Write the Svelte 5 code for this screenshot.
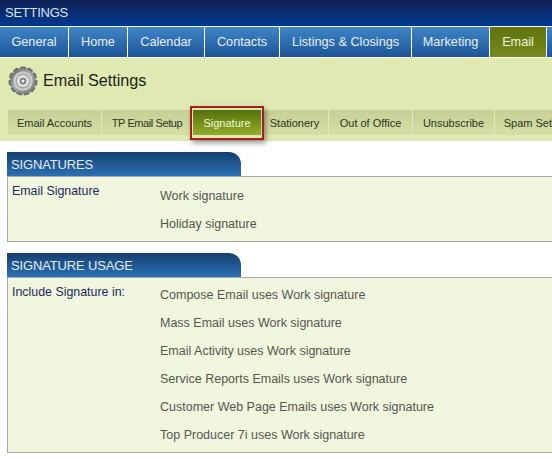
<script>
  const navItems = [
    { label: 'General', width: 69 },
    { label: 'Home', width: 59 },
    { label: 'Calendar', width: 77 },
    { label: 'Contacts', width: 75 },
    { label: 'Listings & Closings', width: 132 },
    { label: 'Marketing', width: 78 },
    { label: 'Email', width: 57, active: true }
  ]

  const subTabs = [
    { label: 'Email Accounts', width: 94 },
    { label: 'TP Email Setup', width: 91, tight: true },
    { label: 'Signature', width: 68, active: true },
    { label: 'Stationery', width: 68 },
    { label: 'Out of Office', width: 84 },
    { label: 'Unsubscribe', width: 82 },
    { label: 'Spam Settings', width: 90 }
  ]

  const signatures = ['Work signature', 'Holiday signature']

  const usage = [
    'Compose Email uses Work signature',
    'Mass Email uses Work signature',
    'Email Activity uses Work signature',
    'Service Reports Emails uses Work signature',
    'Customer Web Page Emails uses Work signature',
    'Top Producer 7i uses Work signature'
  ]

  // gear outline: 11 rounded teeth around the centre
  const teeth = Array.from({ length: 11 }, (_, i) => (i * 360) / 11)
</script>

<div class="page">
  <div class="title-bar">SETTINGS</div>

  <nav class="main-nav">
    {#each navItems as item}
      <div class="nav-item" class:active={item.active} style="width: {item.width}px">{item.label}</div>
    {/each}
  </nav>

  <div class="settings-head">
    <div class="heading">
      <svg class="gear" width="30" height="30" viewBox="0 0 32 32">
        <defs>
          <linearGradient id="gearFill" x1="0" y1="0" x2="1" y2="1">
            <stop offset="0" stop-color="#5f6564" />
            <stop offset="0.45" stop-color="#a5aaa8" />
            <stop offset="1" stop-color="#777c7b" />
          </linearGradient>
        </defs>
        {#each teeth as angle}
          <rect x="12.5" y="0.5" width="7" height="6" rx="2.2" fill="#6f7473" transform="rotate({angle} 16 16)" />
        {/each}
        <circle cx="16" cy="16" r="13" fill="url(#gearFill)" />
        <circle cx="16" cy="16" r="10.5" fill="#c9cdcb" />
        <circle cx="16" cy="16" r="8" fill="#a3a8a6" />
        <circle cx="16" cy="16" r="6.5" fill="#dfe2df" />
        <circle cx="16" cy="16" r="3.6" fill="#7d8280" />
        <circle cx="16" cy="16" r="1.6" fill="#eef0ec" />
      </svg>
      <h1>Email Settings</h1>
    </div>

    <div class="sub-tabs">
      {#each subTabs as tab}
        <div class="sub-tab" class:active={tab.active} class:tight={tab.tight} style="width: {tab.width}px">
          {tab.label}
          {#if tab.active}
            <span class="highlight"></span>
          {/if}
        </div>
      {/each}
    </div>
  </div>

  <section>
    <h2>SIGNATURES</h2>
    <div class="panel">
      <div class="label">Email Signature</div>
      <div class="rows">
        {#each signatures as row}
          <div class="row">{row}</div>
        {/each}
      </div>
    </div>
  </section>

  <section>
    <h2>SIGNATURE USAGE</h2>
    <div class="panel">
      <div class="label">Include Signature in:</div>
      <div class="rows usage">
        {#each usage as row}
          <div class="row">{row}</div>
        {/each}
      </div>
    </div>
  </section>
</div>

<style>
  :global(body) {
    background: #fff;
  }

  .page {
    width: 552px;
    height: 459px;
    overflow: hidden;
    font-family: "Liberation Sans", Arial, sans-serif;
  }

  .title-bar {
    height: 26px;
    box-sizing: border-box;
    padding: 5px 0 0 5px;
    font-size: 13px;
    letter-spacing: -0.25px;
    line-height: 16px;
    color: #dbe4f3;
    background: linear-gradient(#0f2156, #003a8f);
  }

  .main-nav {
    display: flex;
    height: 30px;
    border-top: 1px solid #fff;
    border-bottom: 1px solid #fff;
    background: linear-gradient(#3f85c8, #1c5595);
  }

  .nav-item {
    flex: none;
    box-sizing: border-box;
    border-right: 1px solid #fff;
    text-align: center;
    font-size: 12.7px;
    line-height: 30px;
    color: #e6eef7;
  }

  .nav-item.active {
    background: linear-gradient(#5f7310, #76891c);
    color: #f2f6dc;
  }

  .settings-head {
    height: 83px;
    background: #e0e9b1;
  }

  .heading {
    display: flex;
    align-items: center;
    height: 46px;
    margin-bottom: 6px;
    padding-left: 8px;
    gap: 5px;
  }

  .gear {
    flex: none;
  }

  h1 {
    margin: 0 0 2px;
    font-size: 16.2px;
    font-weight: normal;
    color: #1c1f1a;
  }

  .sub-tabs {
    display: flex;
    height: 25px;
    margin-left: 8px;
    background: linear-gradient(#c5cf96, #d6e0a6);
  }

  .sub-tab {
    position: relative;
    flex: none;
    box-sizing: border-box;
    border-right: 1px solid #e2eabb;
    text-align: center;
    font-size: 11px;
    line-height: 26px;
    white-space: nowrap;
    color: #2d3520;
  }

  .sub-tab.tight {
    letter-spacing: -0.4px;
  }

  .sub-tab.active {
    background: linear-gradient(#55710a, #93ad2c);
    color: #f1f6d8;
    border-right: none;
  }

  /* red marker drawn over the selected tab */
  .highlight {
    position: absolute;
    left: -3px;
    right: -3px;
    top: -4px;
    bottom: -5px;
    border: 2px solid #a81c1c;
    box-shadow: 2px 3px 5px rgba(70, 70, 70, 0.55);
  }

  section {
    margin: 11px 0 0 7px;
  }

  h2 {
    width: 234px;
    height: 24px;
    box-sizing: border-box;
    margin: 0;
    padding-left: 4px;
    font-size: 13px;
    letter-spacing: -0.15px;
    font-weight: normal;
    line-height: 25px;
    color: #e4edf6;
    background: linear-gradient(#163f6f, #2b70b5);
    border-radius: 0 12px 0 0;
  }

  .panel {
    display: flex;
    box-sizing: border-box;
    border: 1px solid #a9a9a9;
    border-right: none;
    background: #f1f6de;
    padding: 7px 0 10px 4px;
  }

  .label {
    width: 148px;
    flex: none;
    font-size: 12.4px;
    line-height: 14px;
    color: #1b2a5c;
  }

  .rows {
    display: flex;
    flex-direction: column;
    gap: 14px;
    padding-top: 5px;
  }

  .rows.usage {
    padding-top: 3px;
  }

  .row {
    height: 14px;
    font-size: 12.5px;
    line-height: 14px;
    color: #555650;
  }
</style>
